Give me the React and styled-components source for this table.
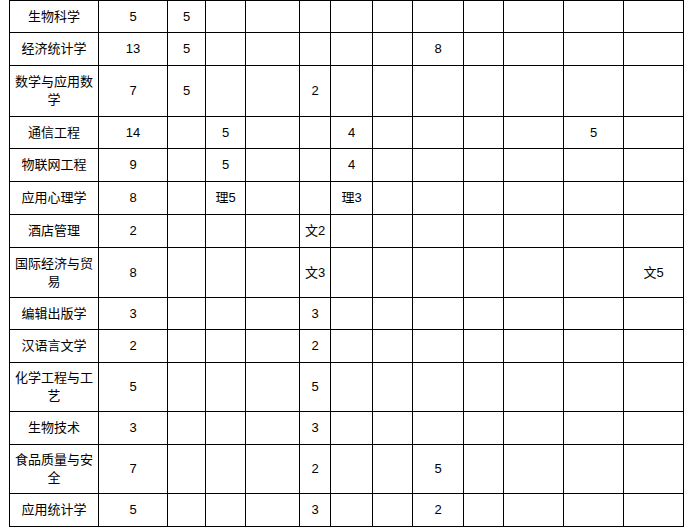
import React from 'react';
import styled, { createGlobalStyle } from 'styled-components';

const GlobalStyle = createGlobalStyle`
  html, body {
    margin: 0;
    padding: 0;
    background: #ffffff;
  }
  body {
    font-family: "Liberation Sans", "Noto Sans CJK SC", sans-serif;
    color: #000000;
  }
`;

const Page = styled.div`
  padding: 0 0 0 9px;
`;

const Sheet = styled.table`
  border-collapse: collapse;
  table-layout: fixed;
  width: 675px;
  font-size: 13px;
  line-height: 18px;
`;

const Row = styled.tr`
  height: ${(p) => p.$h}px;
`;

const Cell = styled.td`
  border: 1px solid #000000;
  padding: 0 4px;
  text-align: center;
  vertical-align: middle;
  word-break: break-all;
  overflow: hidden;
`;

// column widths, taken between the grid lines
const widths = [89, 69, 38, 40, 54, 31, 42, 40, 51, 40, 60, 60, 60];

// row height, name, then the 12 columns; empty string is a blank cell
const rows = [
  [32, '生物科学', '5', '5', '', '', '', '', '', '', '', '', '', ''],
  [33, '经济统计学', '13', '5', '', '', '', '', '', '8', '', '', '', ''],
  [51, '数学与应用数学', '7', '5', '', '', '2', '', '', '', '', '', '', ''],
  [32, '通信工程', '14', '', '5', '', '', '4', '', '', '', '', '5', ''],
  [33, '物联网工程', '9', '', '5', '', '', '4', '', '', '', '', '', ''],
  [33, '应用心理学', '8', '', '理5', '', '', '理3', '', '', '', '', '', ''],
  [33, '酒店管理', '2', '', '', '', '文2', '', '', '', '', '', '', ''],
  [50, '国际经济与贸易', '8', '', '', '', '文3', '', '', '', '', '', '', '文5'],
  [32, '编辑出版学', '3', '', '', '', '3', '', '', '', '', '', '', ''],
  [33, '汉语言文学', '2', '', '', '', '2', '', '', '', '', '', '', ''],
  [49, '化学工程与工艺', '5', '', '', '', '5', '', '', '', '', '', '', ''],
  [33, '生物技术', '3', '', '', '', '3', '', '', '', '', '', '', ''],
  [49, '食品质量与安全', '7', '', '', '', '2', '', '', '5', '', '', '', ''],
  [33, '应用统计学', '5', '', '', '', '3', '', '', '2', '', '', '', ''],
];

export default function App() {
  return (
    <Page>
      <GlobalStyle />
      <Sheet>
        <colgroup>
          {widths.map((w, i) => (
            <col key={i} style={{ width: w }} />
          ))}
        </colgroup>
        <tbody>
          {rows.map(([h, ...cells], r) => (
            <Row key={r} $h={h}>
              {cells.map((text, c) => (
                <Cell key={c}>{text}</Cell>
              ))}
            </Row>
          ))}
        </tbody>
      </Sheet>
    </Page>
  );
}
